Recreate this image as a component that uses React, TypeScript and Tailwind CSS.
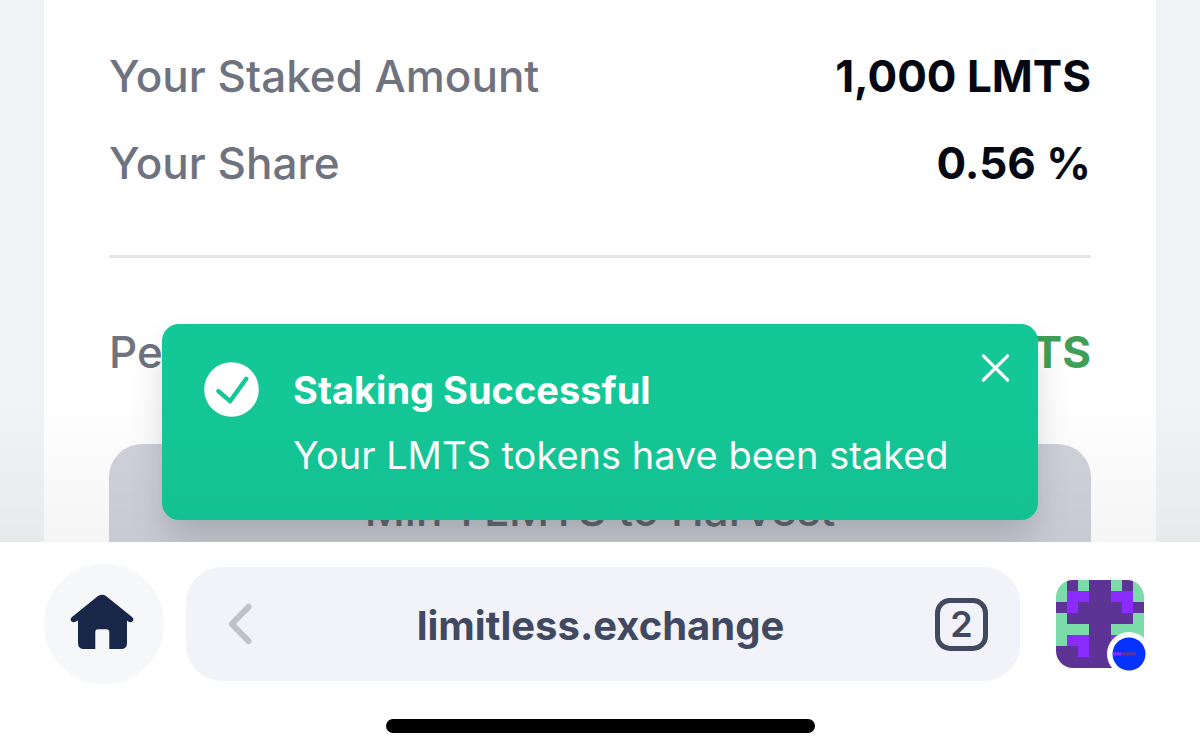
import type { ReactNode } from "react";

const GREEN = "#7bdcaa";
const PURPLE = "#5d3396";
const VIOLET = "#8a2bff";

const AVATAR_ROWS = [
  "GPGPPGPG",
  "GVVPPVVG",
  "PVPPPPVP",
  "GPPPPPPG",
  "GGGPPGGG",
  "GVVPPVVG",
  "PPVPPVPP",
  "PPPPPPPP",
];

const AVATAR_COLORS: Record<string, string> = { G: GREEN, P: PURPLE, V: VIOLET };

function StatRow({ label, children }: { label: string; children: ReactNode }) {
  return (
    <div className="flex items-center justify-between">
      <dt className="font-medium text-[#6f7380]">{label}</dt>
      <dd className="font-bold text-[#060913]">{children}</dd>
    </div>
  );
}

function Toast() {
  return (
    <div
      role="status"
      className="absolute inset-x-[162px] bottom-[22px] flex gap-[33px] rounded-[17px] bg-[#14c796] pt-[38px] pr-7 pb-8 pl-[42px] text-white shadow-[0_20px_36px_-4px_rgba(0,0,0,0.18)]"
    >
      <svg viewBox="0 0 56 56" className="size-14 shrink-0" aria-hidden="true">
        <circle cx="27.5" cy="27.5" r="27.3" fill="#fff" />
        <path
          d="M14.4 29.2 26 39.2 42.3 16.7"
          fill="none"
          stroke="#14c796"
          strokeWidth="4.4"
          strokeLinecap="round"
          strokeLinejoin="round"
        />
      </svg>
      <div className="min-w-0 flex-1 text-[38px] whitespace-nowrap">
        <p className="leading-[56px] font-bold">Staking Successful</p>
        <p className="mt-1 leading-[66px]">Your LMTS tokens have been staked</p>
      </div>
      <button type="button" aria-label="Close" className="absolute top-[29px] right-7">
        <svg viewBox="0 0 30 30" className="size-[30px]" fill="none" stroke="#fff" strokeWidth="3.2" strokeLinecap="round">
          <path d="M3.4 2.8 27.6 27M27.6 2.8 3.4 27" />
        </svg>
      </button>
    </div>
  );
}

function Avatar() {
  return (
    <button type="button" aria-label="Account" className="relative size-[88px] shrink-0">
      <svg viewBox="0 0 8 8" className="size-[88px] rounded-[17px]" shapeRendering="crispEdges">
        {AVATAR_ROWS.flatMap((row, y) =>
          row.split("").map((cell, x) => (
            <rect key={`${x}-${y}`} x={x} y={y} width="1" height="1" fill={AVATAR_COLORS[cell]} />
          )),
        )}
      </svg>
      <svg viewBox="0 0 44 44" className="absolute -right-[7px] -bottom-2 size-11">
        <circle cx="22" cy="22" r="22" fill="#fff" />
        <circle cx="22" cy="22" r="16.5" fill="#0433ff" />
        <rect x="6" y="20.3" width="8" height="3.2" fill="#8a2bff" />
        <rect x="14" y="20.3" width="15" height="3.2" fill="#5d3396" />
      </svg>
    </button>
  );
}

export default function App() {
  return (
    <div className="flex h-screen flex-col overflow-hidden bg-white font-['Inter',sans-serif]">
      <main className="relative min-h-0 flex-1 overflow-hidden bg-[#f2f3f5] px-11">
        <section className="h-full overflow-hidden bg-white px-[65px] pt-[43px]">
          <dl className="space-y-[21px] text-[44px] leading-[66px]">
            <StatRow label="Your Staked Amount">1,000 LMTS</StatRow>
            <StatRow label="Your Share">0.56 %</StatRow>
          </dl>
          <hr className="mt-[59px] border-t-[3px] border-[#e5e6eb]" />
          <dl className="mt-[61px] text-[44px] leading-[66px]">
            <StatRow label="Pending">
              <span className="text-[#419e56]">0 LMTS</span>
            </StatRow>
          </dl>
          <button
            type="button"
            disabled
            className="mt-[59px] h-[132px] w-full rounded-[33px] bg-[#d0d3dc] text-[44px] leading-[66px] font-medium text-[#686c76]"
          >
            Min 1 LMTS to Harvest
          </button>
        </section>
        <Toast />
        <div className="pointer-events-none absolute inset-x-0 bottom-0 h-[150px] bg-gradient-to-b from-black/0 to-black/4" />
      </main>

      <footer className="shrink-0 bg-white pt-[22px] pb-[21px]">
        <nav className="flex items-center pr-14 pl-11">
          <button
            type="button"
            aria-label="Home"
            className="flex size-[120px] shrink-0 items-center justify-center rounded-full bg-[#f6f7f9]"
          >
            <svg viewBox="0 0 68 60" className="h-[60px] w-[68px]" fill="#182747">
              <path d="M28 2.1Q32 -.4 36 2.1L62.3 23.2Q64.2 25.2 62.8 27Q61 29 58.5 27.8L57 26.6V49Q57 55 51 55H39.3V38Q39.3 35.3 36.6 35.3H28Q25.3 35.3 25.3 38V55H14Q8 55 8 49V26.6L5.5 27.8Q3 29 1.2 27Q-.2 25.2 1.7 23.2Z" />
            </svg>
          </button>
          <div className="ml-[22px] flex h-[114px] min-w-0 flex-1 items-center rounded-[36px] bg-[#f2f3f8] pr-8 pl-10">
            <button type="button" aria-label="Back" className="w-10 shrink-0">
              <svg viewBox="0 0 30 42" className="h-[42px] w-[30px]" fill="none" stroke="#bfc1cb" strokeWidth="6" strokeLinecap="round" strokeLinejoin="round">
                <path d="M22.6 3.8 5.8 21 22.6 38.2" />
              </svg>
            </button>
            <button type="button" className="min-w-0 flex-1 pt-1 text-center text-[40px] leading-[60px] font-bold text-[#40495f]">
              limitless.exchange
            </button>
            <button
              type="button"
              aria-label="2 open tabs"
              className="flex size-[53px] shrink-0 items-center justify-center rounded-[15px] border-[5px] border-[#40495f] text-[36px] leading-none font-semibold text-[#40495f]"
            >
              2
            </button>
          </div>
          <div className="ml-9 flex">
            <Avatar />
          </div>
        </nav>
        <div className="mx-auto mt-[35px] h-[14px] w-[429px] rounded-full bg-black" />
      </footer>
    </div>
  );
}
